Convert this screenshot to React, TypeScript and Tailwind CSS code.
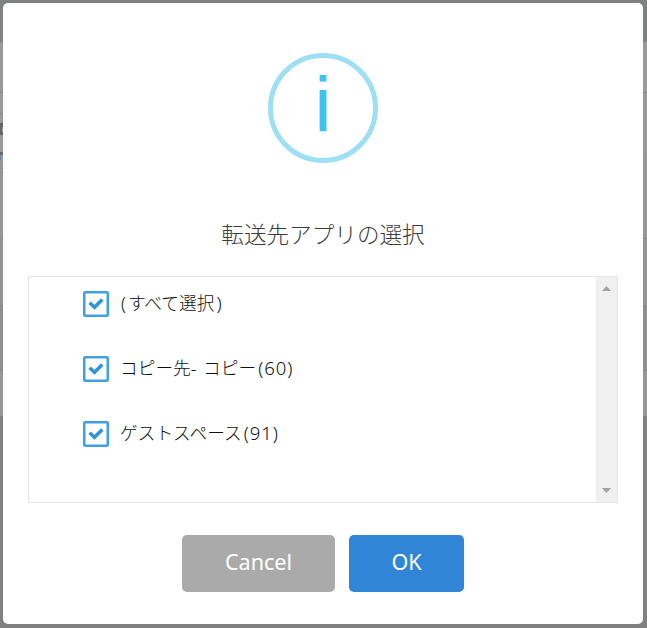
import React from "react";

const apps = [
  { id: "all", open: "(", name: "すべて選択", count: ")" },
  { id: "60", name: "コピー先", dash: "-", copy: "コピー", count: "(60)" },
  { id: "91", name: "ゲストスペース", count: "(91)" },
];

// heights of the dimmed page rows behind the dialog
const Backdrop = () => {
  return (
    <div className="absolute inset-0 flex flex-col bg-[#808080]">
      <div className="h-[42px] bg-[#7f8280]"></div>
      <div className="h-[51px] border-b border-[#858585] bg-[#999a99]"></div>
      <div className="h-[21px] bg-[#999999]">
        <div className="h-[21px] w-[3px] border-b border-[#858585]"></div>
      </div>
      <div className="h-[9px] bg-[#999999]"></div>
      <div className="h-[13px] bg-[#999999]">
        <div className="h-[12px] w-[3px] bg-[#666666] pt-1 pl-[2px]">
          <div className="h-[5px] w-px bg-[#999999]"></div>
        </div>
      </div>
      <div className="h-[16px] bg-[#999999]"></div>
      <div className="h-[3px] bg-[#999999]">
        <div className="h-[3px] w-[3px] bg-[#6b6b6b]"></div>
      </div>
      <div className="h-[18px] bg-[#979797]">
        <div className="h-[18px] w-[3px] border-b border-[#8b8b8b]">
          <div className="h-[5px] w-px bg-[#6f83a8]"></div>
        </div>
      </div>
      <div className="h-[66px] border-b border-[#858585] bg-[#979797]"></div>
      <div className="h-[68px] border-b border-[#828282] bg-[#949494]"></div>
      <div className="h-[64px] border-b border-[#828282] bg-[#909090]"></div>
      <div className="h-[45px] bg-[#979797]"></div>
    </div>
  );
};

const Checkbox = () => {
  return (
    <svg width="26" height="26" viewBox="0 0 26 26" fill="none" className="shrink-0">
      <rect x="1.25" y="1.25" width="23.5" height="23.5" rx="1" stroke="#429fe0" strokeWidth="2.5" />
      <path d="M6.6 11.8L11.5 16.3L19.3 8.5" stroke="#2f93dd" strokeWidth="3.5" />
    </svg>
  );
};

export default function App() {
  return (
    <div className="relative h-[628px] w-[647px] overflow-hidden pt-[3px] pl-[3px] font-['Noto_Sans','Noto_Sans_CJK_JP',sans-serif]">
      <Backdrop />

      <div className="relative flex h-[621px] w-[640px] flex-col items-center rounded-[5px] bg-white pt-[50px]">
        <div className="flex h-[110px] w-[110px] shrink-0 justify-center rounded-full border-[5px] border-[#9de0f6] font-['Liberation_Sans',sans-serif] text-[77px] leading-[94px] text-[#3fc3ee]">
          i
        </div>

        <h2 className="mt-[54px] h-[36px] text-[22.6px] leading-[36px] font-light whitespace-nowrap text-[#3c3c3c]">
          転送先アプリの選択
        </h2>

        <div className="mt-[23px] flex h-[227px] w-[590px] shrink-0 justify-between border border-[#e4e6e6]">
          <div className="flex flex-col gap-[39px] pt-[14px] pl-[54px]">
            {apps.map((app) => (
              <label key={app.id} className="flex h-[26px] items-center gap-[11px] text-[17.7px] leading-[26px] font-light whitespace-nowrap text-[#111111]">
                <Checkbox />
                <span className="pb-0.5">
                  {app.open && <span className="mr-[2px] ml-px font-[350]">{app.open}</span>}
                  {app.name}
                  {app.dash && <span className="mr-0.5">{app.dash} </span>}
                  {app.copy}
                  <span className="ml-0.5 text-[18.5px] tracking-[0.9px]">{app.count}</span>
                </span>
              </label>
            ))}
          </div>
          <div className="flex w-[21px] flex-col items-center justify-between bg-[#f0f0f0] py-[9px]">
            <svg width="9" height="5" viewBox="0 0 9 5" fill="#a3a3a3">
              <path d="M0 5L4.5 0L9 5Z" />
            </svg>
            <svg width="9" height="5" viewBox="0 0 9 5" fill="#a3a3a3">
              <path d="M0 0L4.5 5L9 0Z" />
            </svg>
          </div>
        </div>

        <div className="mt-8 flex gap-[14px] text-[21.6px] leading-[53px] text-white">
          <button className="h-[57px] w-[153px] rounded-[5px] bg-[#aaaaaa] pb-1">Cancel</button>
          <button className="h-[57px] w-[115px] rounded-[5px] bg-[#3085d6] pb-1">OK</button>
        </div>
      </div>
    </div>
  );
}
